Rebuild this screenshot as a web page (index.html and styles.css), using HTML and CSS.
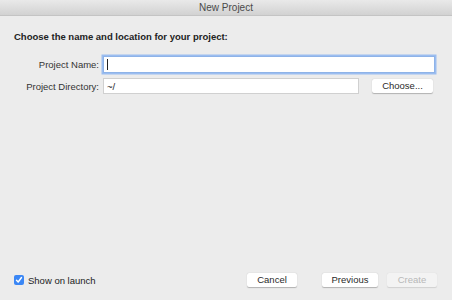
FILE: index.html
```html
<!DOCTYPE html>
<html lang="en">
<head>
    <meta charset="UTF-8">
    <title>New Project</title>
    <link rel="stylesheet" href="styles.css">
</head>
<body>

<div class="window">
    <div class="titlebar">New Project</div>

    <div class="content">
        <h2>Choose the name and location for your project:</h2>

        <div class="form">
            <div class="form-row">
                <label for="project_name">Project Name:</label>
                <div class="field-wrap">
                    <input type="text" id="project_name" class="field focused">
                    <span class="caret"></span>
                </div>
            </div>
            <div class="form-row">
                <label for="project_dir">Project Directory:</label>
                <input type="text" id="project_dir" class="field short" value="~/">
                <button class="btn choose">Choose...</button>
            </div>
        </div>
    </div>

    <div class="footer">
        <label class="check">
            <span class="box">
                <svg width="8" height="8" viewBox="0 0 8 8"><path d="M1.5 4.2 L3.2 6 L6.5 1.5" fill="none" stroke="#fff" stroke-width="1.4" stroke-linecap="round" stroke-linejoin="round"/></svg>
            </span>
            Show on launch
        </label>
        <div class="buttons">
            <button class="btn cancel">Cancel</button>
            <button class="btn previous">Previous</button>
            <button class="btn create" disabled>Create</button>
        </div>
    </div>
</div>

</body>
</html>
```

FILE: styles.css
```css
body {
    margin: 0;
    padding: 0;
    font-family: "Liberation Sans", Arial, sans-serif;
    font-size: 9.5px;
    color: #262626;
    background-color: #ececec;
}
.window {
    width: 452px;
    height: 300px;
    display: flex;
    flex-direction: column;
    background-color: #ececec;
}
.titlebar {
    height: 15px;
    line-height: 15px;
    text-align: center;
    font-size: 10px;
    color: #4a4a4a;
    background: linear-gradient(#e9e9e9, #d2d2d2);
    border-bottom: 1px solid #c4c4c4;
}
.content {
    flex: 1;
    padding: 15px 17px 0 14px;
}
h2 {
    margin: 0 0 14px 0;
    font-size: 9.5px;
    font-weight: bold;
    color: #222;
}
.form {
    display: flex;
    flex-direction: column;
    gap: 5px;
}
.form-row {
    display: flex;
    align-items: center;
}
.form-row label {
    width: 85px;
    text-align: right;
    padding-right: 4px;
    color: #333;
}
.field-wrap {
    flex: 1;
    display: flex;
    position: relative;
}
.field {
    box-sizing: border-box;
    height: 16px;
    margin: 0;
    padding: 0 3px;
    border: 1px solid #d0d0d0;
    background: #fff;
    font-family: inherit;
    font-size: 9.5px;
    color: #222;
    outline: none;
}
.field.focused {
    flex: 1;
    height: 17px;
    border: 1px solid #8eb3e8;
    box-shadow: 0 0 0 1.5px #9bbdf0;
}
.caret {
    position: absolute;
    left: 4px;
    top: 3px;
    width: 1px;
    height: 11px;
    background: #222;
}
.field.short {
    width: 256px;
}
.btn {
    box-sizing: border-box;
    height: 14px;
    margin: 0;
    padding: 0;
    border: none;
    border-radius: 2px;
    background: #fff;
    box-shadow: 0 0.5px 1px rgba(0, 0, 0, 0.25);
    font-family: inherit;
    font-size: 9.5px;
    color: #2a2a2a;
    line-height: 14px;
}
.choose {
    width: 61px;
    margin-left: auto;
    margin-right: 2px;
}
.footer {
    display: flex;
    align-items: center;
    justify-content: space-between;
    padding: 0 15px 13px 14px;
}
.check {
    display: flex;
    align-items: center;
    gap: 4px;
    color: #222;
}
.box {
    width: 10px;
    height: 10px;
    border-radius: 2px;
    background: #3b87f5;
    display: flex;
    align-items: center;
    justify-content: center;
}
.buttons {
    display: flex;
}
.cancel {
    width: 50px;
    margin-right: 25px;
}
.previous {
    width: 56px;
    margin-right: 9px;
}
.create {
    width: 50px;
    background: #f3f3f3;
    color: #b8b8b8;
    box-shadow: 0 0.5px 1px rgba(0, 0, 0, 0.12);
}
```
